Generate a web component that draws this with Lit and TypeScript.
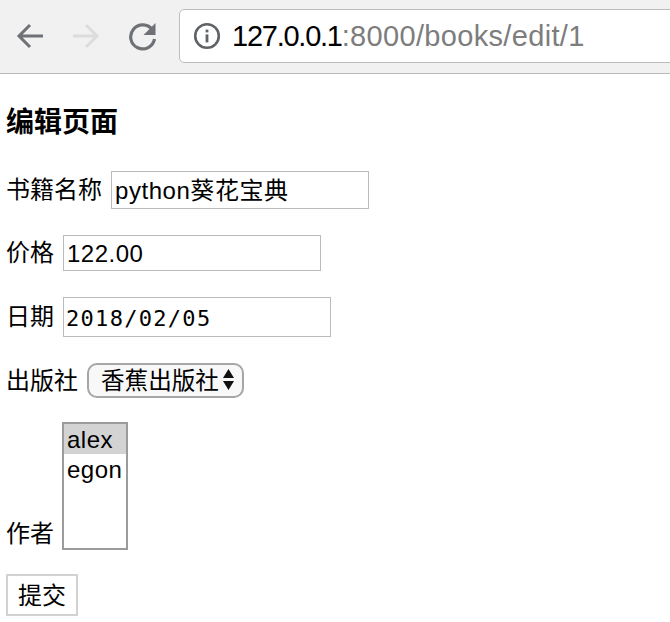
import { LitElement, html, css } from 'lit';
import { customElement } from 'lit/decorators.js';

@customElement('app-root')
export class AppRoot extends LitElement {
  static styles = css`
    :host {
      display: block;
      width: 670px;
      height: 622px;
      overflow: hidden;
      background: #fff;
      color: #000;
      font-family: "Liberation Sans", "Noto Sans CJK SC", sans-serif;
      font-size: 24px;
    }

    /* browser chrome */
    .toolbar {
      box-sizing: border-box;
      height: 74px;
      background: #f1f1f1;
      border-bottom: 1px solid #b9b9b9;
      display: flex;
      align-items: center;
      padding: 0 0 2px 16px;
      overflow: hidden;
    }
    .nav {
      display: block;
      flex: none;
      width: 30px;
      height: 30px;
      margin-right: 26px;
    }
    .nav.reload {
      margin-right: 21px;
    }
    .omnibox {
      flex: none;
      box-sizing: border-box;
      width: 520px;
      height: 54px;
      background: #fff;
      border: 1px solid #bcbcbc;
      border-radius: 5px;
      display: flex;
      align-items: center;
      padding-left: 13px;
      font-size: 29px;
    }
    .omnibox svg {
      flex: none;
      width: 28px;
      height: 28px;
      margin-right: 11px;
    }
    .url {
      padding-top: 2px;
    }
    .host {
      color: #000;
      letter-spacing: -1.25px;
    }
    .rest {
      color: #7d7d7d;
      letter-spacing: 0.33px;
    }

    /* form */
    .page {
      padding: 30px 0 0 6px;
      display: flex;
      flex-direction: column;
      align-items: flex-start;
    }
    h3 {
      margin: 0 0 29px;
      font-size: 28px;
      line-height: 38px;
      font-weight: 700;
    }
    .row {
      display: flex;
      align-items: center;
      gap: 9px;
      line-height: 30px;
    }
    .row.bottom {
      align-items: flex-end;
      gap: 8px;
      margin-top: 24px;
    }
    .row.spaced {
      margin-top: 26px;
    }
    .field {
      box-sizing: border-box;
      display: block;
      margin: 0;
      background: #fff;
      color: #000;
      border: 1px solid #bbb;
      border-radius: 0;
      outline: none;
      font: inherit;
    }
    .name {
      width: 258px;
      height: 38px;
      padding: 0 3px 4px;
      letter-spacing: 0.55px;
    }
    .price {
      width: 258px;
      height: 36px;
      padding: 1px 3px 0;
      letter-spacing: 0.5px;
    }
    .date {
      width: 268px;
      height: 40px;
      padding: 3px 2px 0;
      font-family: "DejaVu Sans Mono", monospace;
      font-size: 22px;
      letter-spacing: 1.3px;
    }
    .publisher-label {
      padding-top: 1px;
    }
    .select {
      box-sizing: border-box;
      width: 157px;
      height: 35px;
      display: flex;
      align-items: center;
      justify-content: space-between;
      padding: 1px 8px 0 12px;
      background: #f8f8f8;
      border: 2px solid #a6a6a6;
      border-radius: 10px;
      font-size: 23.6px;
    }
    .select svg {
      flex: none;
      width: 11px;
      height: 21px;
      margin-top: -3px;
    }
    .author-label {
      padding-bottom: 1px;
    }
    .listbox {
      box-sizing: border-box;
      width: 66px;
      height: 128px;
      border: 2px solid #9b9b9b;
      background: #fff;
      overflow: hidden;
    }
    .option {
      height: 30px;
      line-height: 32px;
      padding-left: 3px;
      letter-spacing: 0.5px;
    }
    .option.selected {
      background: #d3d3d3;
    }
    .submit {
      box-sizing: border-box;
      width: 72px;
      height: 42px;
      margin: 24px 0 0;
      padding: 0 0 3px;
      background: #fff;
      border: 2px solid #d2d2d2;
      color: #000;
      font: inherit;
    }
  `;

  render() {
    return html`
      <div class="toolbar">
        <svg class="nav" viewBox="0 0 30 30" fill="none" stroke="#6e7175" stroke-width="3">
          <path d="M27 15H3M14 4 3 15l11 11" />
        </svg>
        <svg class="nav" viewBox="0 0 30 30" fill="none" stroke="#dcdcdc" stroke-width="3">
          <path d="M1 15h24M14 4l11 11-11 11" />
        </svg>
        <svg class="nav reload" viewBox="0 0 30 30" fill="none">
          <path d="M24.5 9A12 12 0 1 0 26.500 18" stroke="#6e7175" stroke-width="3.2" />
          <path d="M27.500 2v12h-12z" fill="#6e7175" />
        </svg>
        <div class="omnibox">
          <svg viewBox="0 0 28 28" fill="none">
            <circle cx="14" cy="14" r="11.8" stroke="#5f6368" stroke-width="2.6" />
            <rect x="12.6" y="12.4" width="2.8" height="8" fill="#5f6368" />
            <rect x="12.6" y="7.6" width="2.8" height="2.8" fill="#5f6368" />
          </svg>
          <span class="url"><span class="host">127.0.0.1</span><span class="rest">:8000/books/edit/1</span></span>
        </div>
      </div>
      <form class="page" @submit=${(e: Event) => e.preventDefault()}>
        <h3>编辑页面</h3>
        <div class="row">
          <span>书籍名称</span>
          <input class="field name" value="python葵花宝典" />
        </div>
        <div class="row spaced">
          <span>价格</span>
          <input class="field price" value="122.00" />
        </div>
        <div class="row spaced">
          <span>日期</span>
          <input class="field date" value="2018/02/05" />
        </div>
        <div class="row spaced">
          <span class="publisher-label">出版社</span>
          <div class="select">
            <span>香蕉出版社</span>
            <svg viewBox="0 0 11 21" fill="#111">
              <path d="M5.5 0 11 9H0zM0 12h11l-5.500 9z" />
            </svg>
          </div>
        </div>
        <div class="row bottom">
          <span class="author-label">作者</span>
          <div class="listbox">
            <div class="option selected">alex</div>
            <div class="option">egon</div>
          </div>
        </div>
        <button class="submit" type="button">提交</button>
      </form>
    `;
  }
}
